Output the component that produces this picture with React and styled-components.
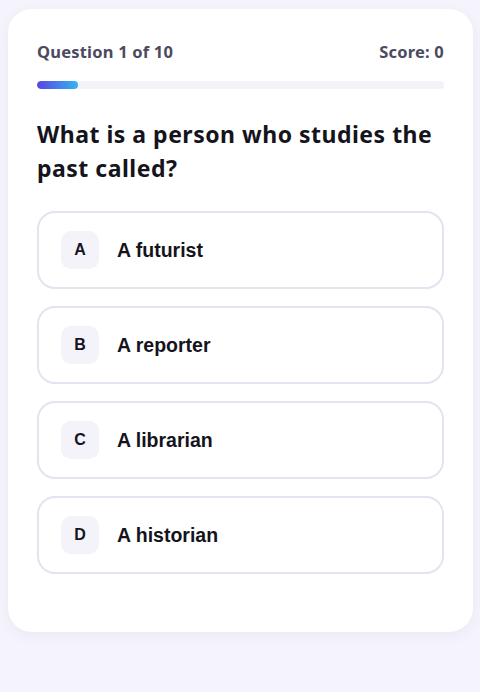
import React, { useState } from 'react'
import styled, { createGlobalStyle } from 'styled-components'

const GlobalStyle = createGlobalStyle`
  * { box-sizing: border-box; }
  body {
    margin: 0;
    background: #f5f4fc;
    font-family: "Noto Sans", "Liberation Sans", sans-serif;
  }
`

const Page = styled.div`
  min-height: 692px;
  padding: 9px 7px 9px 8px;
`

const Card = styled.div`
  background: #fff;
  border-radius: 24px;
  box-shadow: 0 4px 14px rgba(60, 50, 140, 0.06);
  padding: 32px 29px 58px 29px;
  display: flex;
  flex-direction: column;
`

const TopRow = styled.div`
  display: flex;
  justify-content: space-between;
  align-items: center;
  font-size: 16.5px;
  font-weight: 700;
  letter-spacing: 0.2px;
  color: #4b4a5e;
  line-height: 22px;
`

const Track = styled.div`
  margin-top: 18px;
  height: 8px;
  border-radius: 4px;
  background: #f3f2f9;
  overflow: hidden;
`

const Fill = styled.div`
  height: 100%;
  border-radius: 4px;
  background: linear-gradient(90deg, #5b45e3, #34b4f4);
`

const Question = styled.h2`
  margin: 28px 0 26px;
  font-size: 23px;
  line-height: 34px;
  font-weight: 700;
  letter-spacing: 0.5px;
  color: #15141c;
`

const Options = styled.div`
  display: flex;
  flex-direction: column;
  gap: 17px;
`

const Option = styled.button`
  display: flex;
  align-items: center;
  gap: 18px;
  width: 100%;
  padding: 18px 22px;
  background: #fff;
  border: 2px solid #e4e3ef;
  border-radius: 18px;
  cursor: pointer;
  text-align: left;
  font-family: "Liberation Sans", Arial, sans-serif;
`

const Letter = styled.span`
  width: 38px;
  height: 38px;
  border-radius: 10px;
  background: #f4f3fa;
  display: flex;
  align-items: center;
  justify-content: center;
  font-size: 16px;
  font-weight: 700;
  color: #15141c;
`

const Answer = styled.span`
  font-size: 19.5px;
  font-weight: 700;
  color: #15141c;
`

const answers = ['A futurist', 'A reporter', 'A librarian', 'A historian']

export default function App() {
  const [current] = useState(1)
  const total = 10
  return (
    <>
      <GlobalStyle />
      <Page>
        <Card>
          <TopRow>
            <span>Question {current} of {total}</span>
            <span>Score: 0</span>
          </TopRow>
          <Track>
            <Fill style={{ width: `${(current / total) * 100}%` }} />
          </Track>
          <Question>What is a person who studies the past called?</Question>
          <Options>
            {answers.map((a, i) => (
              <Option key={a}>
                <Letter>{'ABCD'[i]}</Letter>
                <Answer>{a}</Answer>
              </Option>
            ))}
          </Options>
        </Card>
      </Page>
    </>
  )
}
